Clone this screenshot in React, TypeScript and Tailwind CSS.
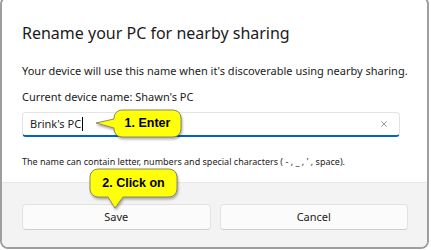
import { X } from "lucide-react";

const font = { fontFamily: '"Noto Sans", "Open Sans", sans-serif' };

const EnterCallout = () => (
  <>
    <svg
      className="absolute left-[94px] top-[107px] drop-shadow-[1px_2px_1px_rgba(0,0,0,0.3)]"
      width="92"
      height="34"
      viewBox="0 0 92 34"
    >
      <path
        d="M 28 3 H 79 A 8 8 0 0 1 87 11 V 22 A 8 8 0 0 1 79 30 H 28 A 8 8 0 0 1 20 22 V 21 L 2 16 L 20 12 V 11 A 8 8 0 0 1 28 3 Z"
        fill="#ffff0a"
        stroke="#8a8a5c"
        strokeWidth="1"
      />
    </svg>
    <div className="absolute left-[114px] top-[110px] flex h-[27px] w-[67px] items-center justify-center font-['Liberation_Sans',Arial,sans-serif] text-[12.5px] font-bold text-black">
      1. Enter
    </div>
  </>
);

const ClickCallout = () => (
  <>
    <svg
      className="absolute left-[86px] top-[166px] drop-shadow-[1px_2px_1px_rgba(0,0,0,0.3)]"
      width="96"
      height="46"
      viewBox="0 0 96 46"
    >
      <path
        d="M 12 3 H 83 A 8 8 0 0 1 91 11 V 23 A 8 8 0 0 1 83 31 H 37 L 29 42 L 22 31 H 12 A 8 8 0 0 1 4 23 V 11 A 8 8 0 0 1 12 3 Z"
        fill="#ffff0a"
        stroke="#8a8a5c"
        strokeWidth="1"
      />
    </svg>
    <div className="absolute left-[90px] top-[169px] flex h-[28px] w-[87px] items-center justify-center font-['Liberation_Sans',Arial,sans-serif] text-[12.5px] font-bold text-black">
      2. Click on
    </div>
  </>
);

export default function App() {
  return (
    <div className="relative h-[250px] w-[431px] overflow-hidden bg-white" style={font}>
      <div className="mt-[-4px] flex h-[253px] w-[429px] flex-col overflow-hidden rounded-[8px] border-2 border-[#9e9e9e] bg-white text-[#1b1b1b]">
        <div className="flex flex-1 flex-col pl-[20px] pr-[19px] pt-[23px]">
          <div className="h-[24px] text-[16px] leading-[24px]">
            Rename your PC for nearby sharing
          </div>
          <div className="mt-[18px] h-[16px] text-[11px] leading-[16px]">
            Your device will use this name when it's discoverable using nearby sharing.
          </div>
          <div className="mt-[10px] h-[16px] text-[11px] leading-[16px]">
            Current device name: Shawn's PC
          </div>
          <div className="mt-[7px] flex h-[25px] w-[378px] items-center rounded-[4px] border border-[#e3e3e3] border-b-2 border-b-[#0067c0] bg-white pl-[7px] pr-[10px]">
            <span className="text-[11px] leading-[16px]">Brink's PC</span>
            <span className="ml-[1px] h-[14px] w-[1px] bg-black" />
            <span className="flex-1" />
            <X className="h-[10px] w-[10px] text-[#5c5c5c]" strokeWidth={1.5} />
          </div>
          <div className="mt-[18px] h-[14px] text-[9px] leading-[14px]">
            The name can contain letter, numbers and special characters ( - , _ , ' , space).
          </div>
        </div>
        <div className="flex h-[65px] gap-[9px] border-t border-[#e8e8e8] bg-[#f3f3f3] pl-[20px] pr-[19px] pt-[21px]">
          <button className="h-[26px] w-[189px] rounded-[4px] border border-[#e2e2e2] border-b-[#d0d0d0] bg-[#fbfbfb] text-[11px] text-[#1b1b1b]">
            Save
          </button>
          <button className="h-[26px] w-[189px] rounded-[4px] border border-[#e2e2e2] border-b-[#d0d0d0] bg-[#fbfbfb] text-[11px] text-[#1b1b1b]">
            Cancel
          </button>
        </div>
      </div>
      <EnterCallout />
      <ClickCallout />
    </div>
  );
}
